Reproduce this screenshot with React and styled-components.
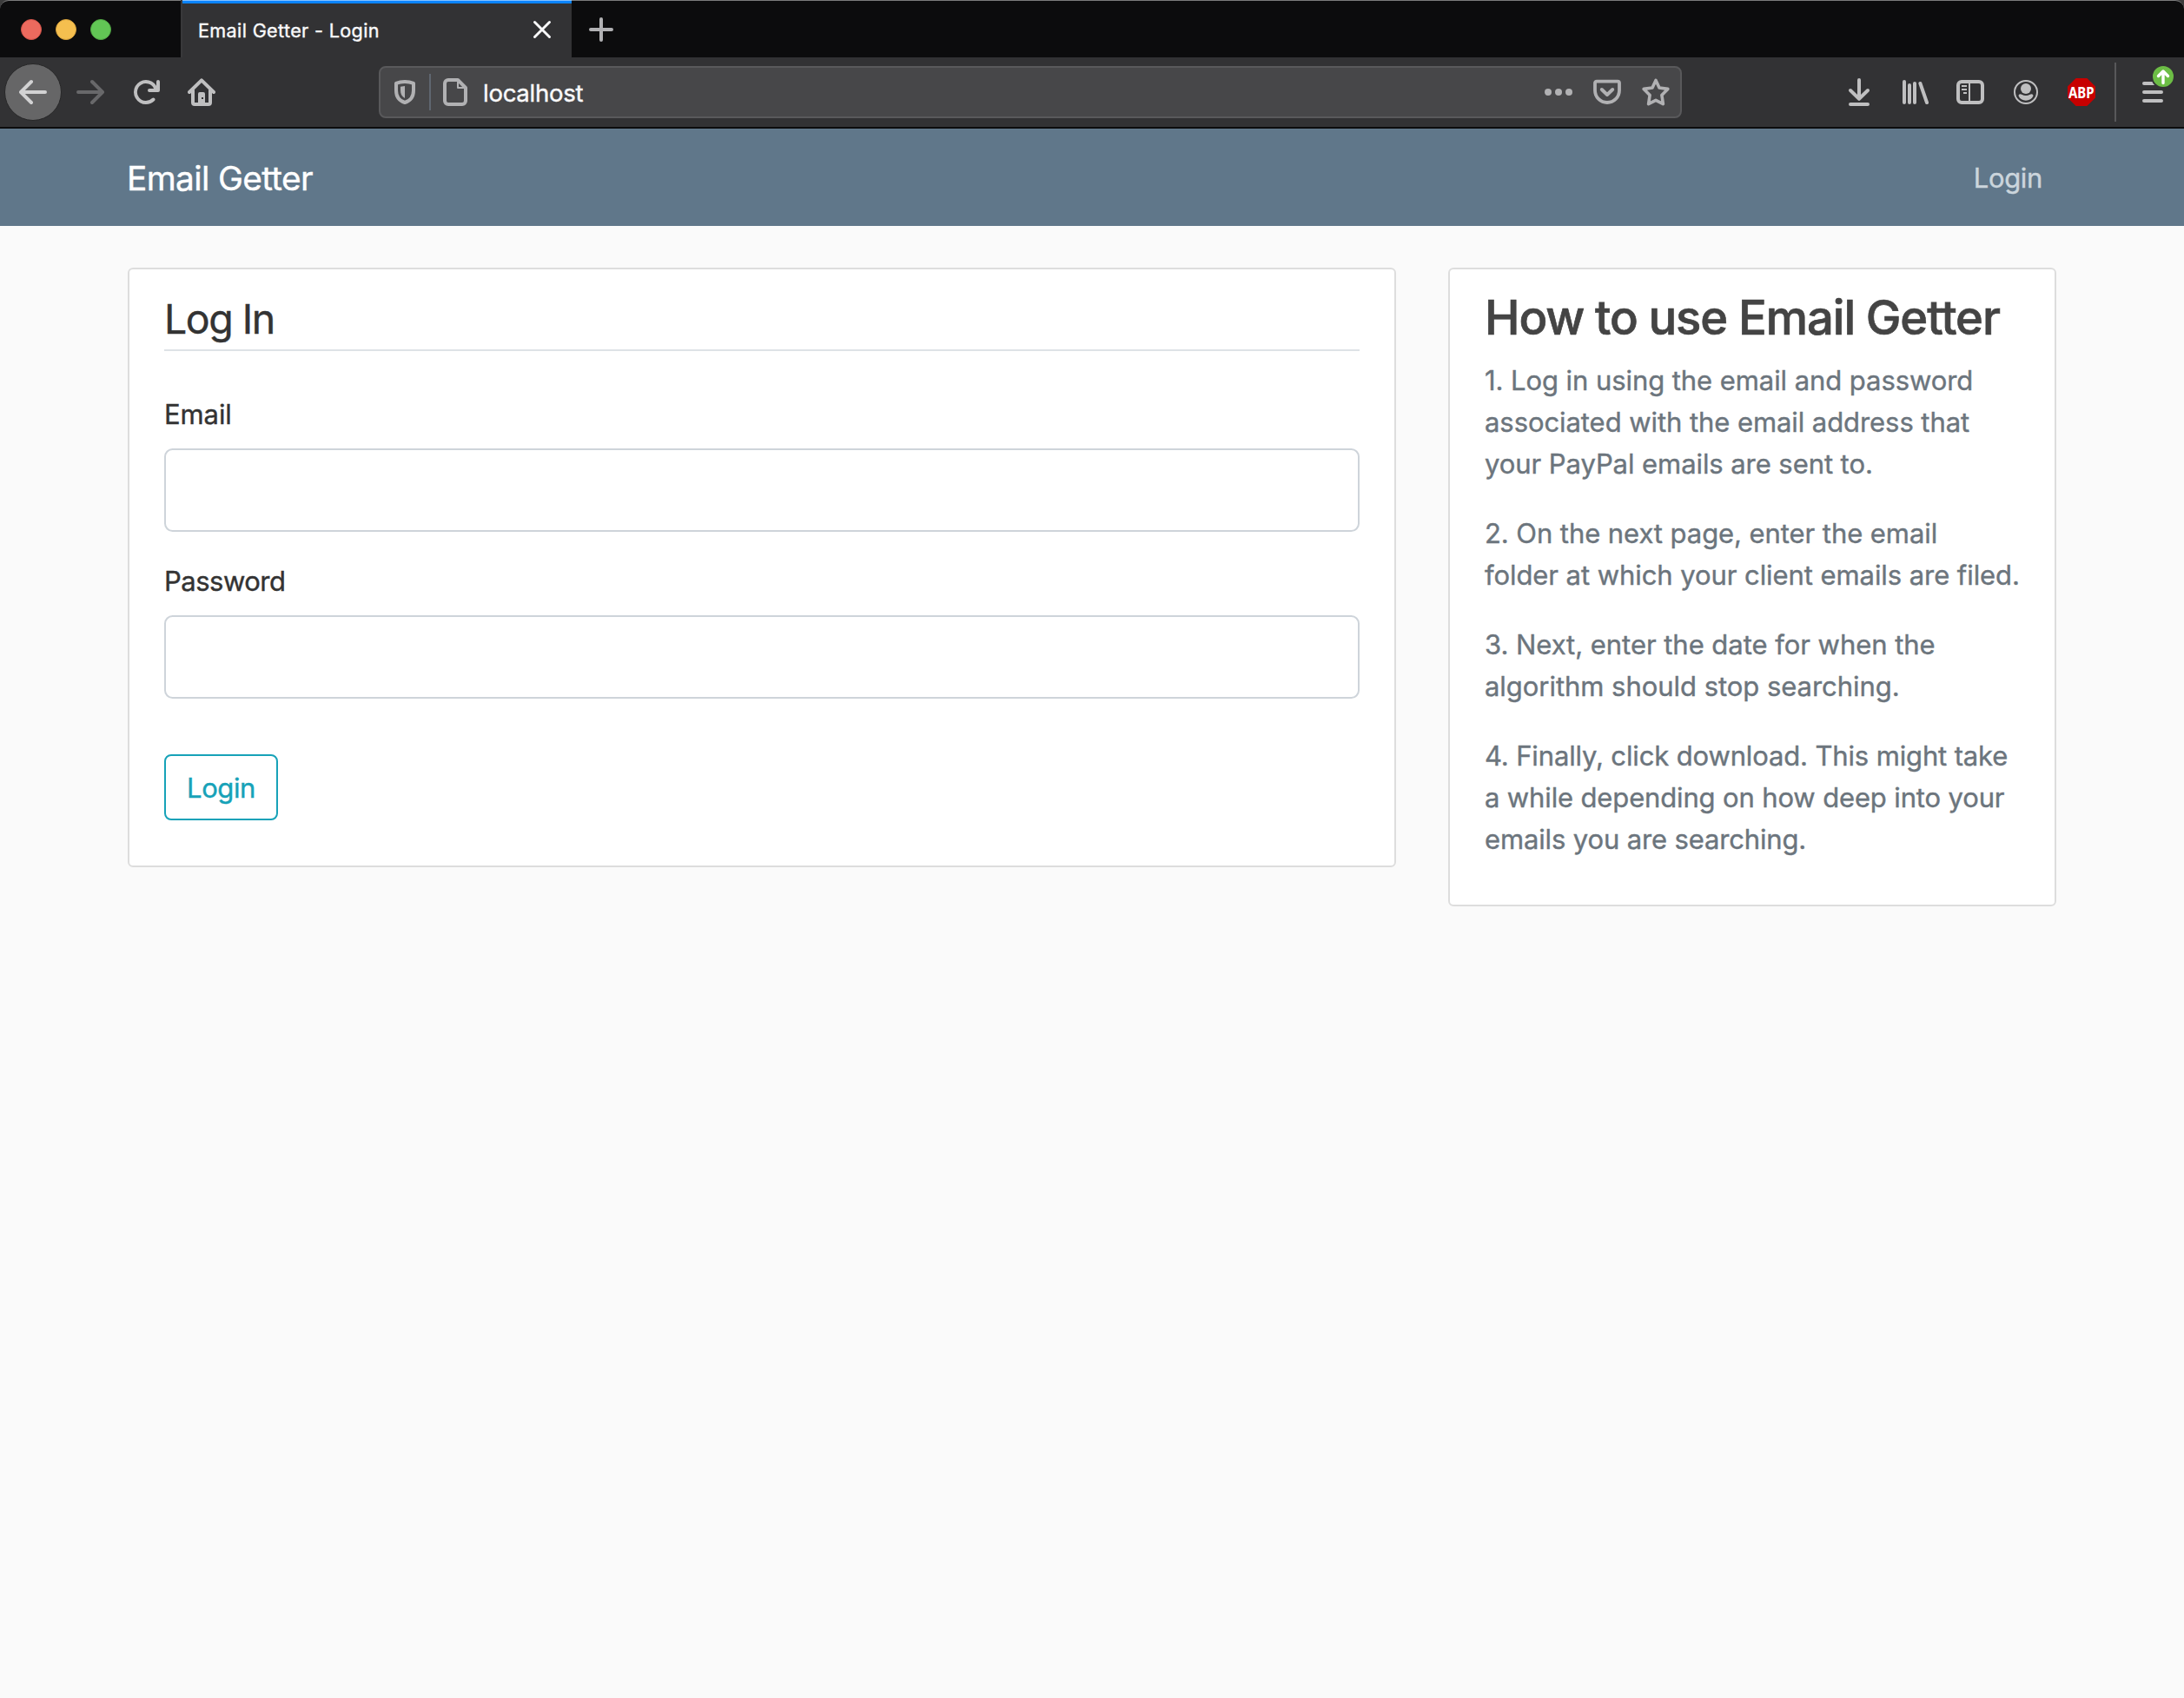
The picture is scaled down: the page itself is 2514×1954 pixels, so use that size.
import React from "react";
import styled, { createGlobalStyle } from "styled-components";

const GlobalStyle = createGlobalStyle`
  *, *::before, *::after { box-sizing: border-box; }
  html, body { margin: 0; padding: 0; background: #fafafa; }
  body {
    font-family: Inter, "Liberation Sans", sans-serif;
    font-size: 31px;
    font-weight: 400;
    line-height: 48px;
    color: #333333;
    font-optical-sizing: none;
    -webkit-text-stroke: 0.4px currentColor;
  }
`;

const Window = styled.div`
  display: flex;
  flex-direction: column;
  width: 2514px;
  height: 1954px;
  overflow: hidden;
  background: #fafafa;
`;

/* ---------- browser chrome ---------- */

const TitleArea = styled.div`
  background: #3c3c3c;
`;

const TabStrip = styled.div`
  display: flex;
  height: 66px;
  background: #0c0c0d;
  border-top: 1px solid #7c7c7c;
  border-radius: 10px 10px 0 0;
`;

const WindowControls = styled.div`
  display: flex;
  align-items: center;
  gap: 16px;
  width: 208px;
  padding-left: 24px;
`;

const Light = styled.span`
  width: 24px;
  height: 24px;
  border-radius: 50%;
  background: ${(p) => p.$fill};
  border: 1px solid ${(p) => p.$edge};
`;

const Tab = styled.div`
  display: flex;
  align-items: center;
  justify-content: space-between;
  width: 450px;
  margin-top: -1px;
  padding: 0 22px 0 18px;
  border-left: 2px solid #38383a;
  background: linear-gradient(#84c1ff 0 1px, #0a84ff 1px 4px, #323234 4px);
  color: #f9f9fa;
`;

const TabTitle = styled.span`
  padding-top: 3px;
  font-size: 21.6px;
  letter-spacing: ${(p) => p.$track};
  white-space: nowrap;
`;

const NewTab = styled.button`
  display: flex;
  align-items: center;
  justify-content: center;
  width: 68px;
  padding: 0;
  border: 0;
  background: none;
`;

const Toolbar = styled.div`
  display: flex;
  align-items: center;
  height: 82px;
  border-bottom: 2px solid #0c0c0d;
  background: #323234;
  color: #bfbfc0;
`;

const NavButtons = styled.div`
  display: flex;
  align-items: center;
  width: 436px;
  padding-left: 5px;
`;

const BackButton = styled.button`
  display: flex;
  align-items: center;
  justify-content: center;
  width: 66px;
  height: 66px;
  margin-right: 1px;
  padding: 0;
  border: 1px solid #272728;
  border-radius: 50%;
  background: #666667;
  color: #d2d2d3;
`;

const ToolButton = styled.button`
  position: relative;
  display: flex;
  align-items: center;
  justify-content: center;
  width: 64px;
  height: 64px;
  padding: 0;
  border: 0;
  background: none;
  color: ${(p) => (p.$dim ? "#68686a" : "#bfbfc0")};
`;

const UrlBar = styled.div`
  display: flex;
  align-items: center;
  width: 1500px;
  height: 60px;
  padding: 0 12px;
  border: 2px solid #59595b;
  border-radius: 8px;
  background: #474749;
  color: #b1b1b3;
`;

const UrlDivider = styled.span`
  width: 2px;
  height: 42px;
  margin: 0 12px;
  background: #5f6670;
`;

const Address = styled.span`
  flex: 1;
  padding: 2px 0 0 16px;
  font-size: 27.6px;
  letter-spacing: -0.3px;
  color: #f9f9fa;
`;

const PageActions = styled.div`
  display: flex;
  gap: 24px;
`;

const Tools = styled.div`
  display: flex;
  align-items: center;
  margin-left: auto;
  padding-right: 4px;
`;

const ToolDivider = styled.span`
  width: 2px;
  height: 68px;
  margin: 0 10px 0 6px;
  background: #58585a;
`;

const AbpBadge = styled.span`
  display: flex;
  align-items: center;
  justify-content: center;
  width: 32px;
  height: 32px;
  background: #c70000;
  color: #fff;
  clip-path: polygon(30% 0, 70% 0, 100% 30%, 100% 70%, 70% 100%, 30% 100%, 0 70%, 0 30%);
`;

const AbpText = styled.span`
  font: 700 18px/32px "Noto Sans", "Open Sans", sans-serif;
  transform: scaleX(0.83);
  -webkit-text-stroke: 0;
`;

const UpdateBadge = styled.span`
  position: absolute;
  top: 0;
  right: 6px;
  width: 28px;
  height: 28px;
  border-radius: 50%;
  border: 2px solid #323234;
  background: #6cbd45;
`;

const Icon = ({ size = 32, box = 32, children, ...rest }) => (
  <svg
    width={size}
    height={size}
    viewBox={`0 0 ${box} ${box}`}
    fill="none"
    stroke="currentColor"
    strokeWidth="4"
    strokeLinecap="round"
    strokeLinejoin="round"
    {...rest}
  >
    {children}
  </svg>
);

const ArrowPath = () => (
  <path
    fill="currentColor"
    stroke="none"
    d="M15 7H3.414l4.293-4.293a1 1 0 0 0-1.414-1.414l-6 6a1 1 0 0 0 0 1.414l6 6a1 1 0 0 0 1.414-1.414L3.414 9H15a1 1 0 0 0 0-2z"
  />
);

const BackIcon = () => (
  <Icon box={16}>
    <ArrowPath />
  </Icon>
);

const ForwardIcon = () => (
  <Icon box={16}>
    <g transform="matrix(-1 0 0 1 16 0)">
      <ArrowPath />
    </g>
  </Icon>
);

const ReloadIcon = () => (
  <Icon box={16}>
    <path
      fill="currentColor"
      stroke="none"
      d="M15 1a1 1 0 0 0-1 1v2.418A6.995 6.995 0 1 0 8 15a6.954 6.954 0 0 0 4.95-2.05 1 1 0 0 0-1.414-1.414A5.019 5.019 0 1 1 12.549 6H10a1 1 0 0 0 0 2h5a1 1 0 0 0 1-1V2a1 1 0 0 0-1-1z"
    />
  </Icon>
);

const HomeIcon = () => (
  <Icon>
    <path d="M2 16 16 2.4 30 16" />
    <path d="M6 14v14a2 2 0 0 0 2 2h16a2 2 0 0 0 2-2V14" />
    <path
      fill="currentColor"
      stroke="none"
      fillRule="evenodd"
      d="M14 16h4a2 2 0 0 1 2 2v12h-8V18a2 2 0 0 1 2-2zm2 6v2h2v-2z"
    />
  </Icon>
);

const ShieldIcon = () => (
  <Icon>
    <path d="M16 4c3.6 0 7 .6 10 1.8V14c0 7-3.5 12-10 14C9.5 26 6 21 6 14V5.8C9 4.6 12.4 4 16 4z" />
    <path fill="currentColor" stroke="none" d="M16 9v14c-3.6-2-5-5-5-9v-4.2z" />
  </Icon>
);

const PageIcon = () => (
  <Icon>
    <path d="M8 2h11l9 9v15a4 4 0 0 1-4 4H8a4 4 0 0 1-4-4V6a4 4 0 0 1 4-4z" />
    <path strokeWidth="2" d="M19 4v7h8" />
  </Icon>
);

const DotsIcon = () => (
  <Icon fill="currentColor" stroke="none">
    <circle cx="4" cy="16" r="4" />
    <circle cx="16" cy="16" r="4" />
    <circle cx="28" cy="16" r="4" />
  </Icon>
);

const PocketIcon = () => (
  <Icon>
    <path strokeWidth="3.8" d="M4 3.6h24a2 2 0 0 1 2 2V14a14 14 0 0 1-28 0V5.6a2 2 0 0 1 2-2z" />
    <path d="m9.8 13 6.2 6 6.2-6" />
  </Icon>
);

const StarIcon = () => (
  <Icon>
    <path
      strokeWidth="3.6"
      d="M16 2.4 20 11l9.8 1.4-6.9 7 1.5 10.3L16 25.4l-8.4 4.3 1.5-10.3-6.9-7L12 11z"
    />
  </Icon>
);

const DownloadIcon = () => (
  <Icon>
    <path d="M16 2v21M6 14l10 9.8L26 14M6 30h20" />
  </Icon>
);

const LibraryIcon = () => (
  <Icon>
    <path d="M4 4v24M10 8v20M16 6v22M22.4 6 30 28" />
  </Icon>
);

const SidebarIcon = () => (
  <Icon>
    <rect x="2" y="4" width="28" height="24" rx="4" />
    <path strokeWidth="2" strokeLinecap="butt" d="M15 4v24M6 9h6M6 13h6M8 17h4" />
  </Icon>
);

const AccountIcon = () => (
  <Icon>
    <circle cx="16" cy="16" r="13" strokeWidth="2" />
    <circle cx="16" cy="12" r="6" fill="currentColor" stroke="none" />
    <path
      fill="currentColor"
      stroke="none"
      d="M7.6 20.6c-.2-2.6 2-3 3.7-1.9 2.9 1.7 6.5 1.7 9.4 0 1.7-1.1 3.9-.7 3.7 1.9-1.4 3.3-4.6 5.2-8.4 5.2s-7-1.9-8.4-5.2z"
    />
  </Icon>
);

const MenuIcon = () => (
  <Icon>
    <path d="M6 6h20M6 16h20M6 26h20" />
  </Icon>
);

const PlusIcon = () => (
  <Icon color="#b1b1b3">
    <path d="M16 4v24M4 16h24" />
  </Icon>
);

const CloseButton = styled.button`
  display: flex;
  margin-top: 2px;
  padding: 0;
  border: 0;
  background: none;
  color: inherit;
`;

const CloseIcon = () => (
  <Icon size={24} box={24} strokeWidth="3">
    <path d="m3.5 3.5 17 17M20.5 3.5l-17 17" />
  </Icon>
);

const UpArrowIcon = () => (
  <Icon size={24} box={24} strokeWidth="3.4" color="#fff" display="block">
    <path d="M12 6v13.5M6.5 11.5 12 6l5.5 5.5" />
  </Icon>
);

/* ---------- page ---------- */

const SiteHeader = styled.header`
  display: flex;
  align-items: center;
  justify-content: space-between;
  height: 112px;
  padding: 2px 163px 0 146px;
  background: #60778a;
`;

const Brand = styled.a`
  font-size: 38.8px;
  letter-spacing: ${(p) => p.$track};
  color: #fff;
`;

const HeaderLink = styled.a`
  color: #cbd5dc;
  letter-spacing: ${(p) => p.$track};
`;

const Main = styled.main`
  display: grid;
  grid-template-columns: 1460px 700px;
  column-gap: 60px;
  align-items: start;
  padding: 48px 147px 0;
`;

const Card = styled.section`
  padding: 20px 40px;
  border: 2px solid #dddddd;
  border-radius: 6px;
  background: #fff;
`;

const Fieldset = styled.fieldset`
  min-width: 0;
  margin: 0 0 32px;
  padding: 0;
  border: 0;
`;

const FormTitle = styled.h2`
  height: 74px;
  margin: 0 0 49px;
  padding-top: 2px;
  border-bottom: 2px solid #dee2e6;
  font-size: 46.5px;
  font-weight: 400;
  line-height: 71px;
  letter-spacing: ${(p) => p.$track};
`;

const Field = styled.label`
  display: flex;
  flex-direction: column;
  gap: 15px;
  margin-bottom: 33px;
  letter-spacing: ${(p) => p.$track};

  &:last-child {
    margin-bottom: 32px;
  }
`;

const Input = styled.input`
  width: 100%;
  height: 96px;
  padding: 16px 32px;
  border: 2px solid #ced4da;
  border-radius: 9.6px;
  background: #fff;
  font: inherit;
  outline: none;
`;

const Submit = styled.button`
  display: block;
  width: 131px;
  height: 76px;
  margin-bottom: 32px;
  padding: 1px 0 0;
  border: 2px solid #17a2b8;
  border-radius: 8px;
  background: transparent;
  color: #17a2b8;
  font: inherit;
  letter-spacing: ${(p) => p.$track};
`;

const HelpTitle = styled.h3`
  margin: 0 0 15px;
  padding-top: 2px;
  color: #444444;
  font-size: 54.4px;
  font-weight: 500;
  line-height: 67.2px;
  letter-spacing: ${(p) => p.$track};
  word-spacing: -0.8px;
  white-space: nowrap;
  -webkit-text-stroke: 0.7px currentColor;
`;

const Step = styled.p`
  margin: 0 0 32px;
  color: #6c757d;
  letter-spacing: ${(p) => p.$track};
  white-space: pre;

  &:last-child {
    margin-bottom: 31px;
  }
`;

const steps = [
  {
    track: "-0.07px",
    text: "1. Log in using the email and password\nassociated with the email address that\nyour PayPal emails are sent to.",
  },
  {
    track: "-0.07px",
    text: "2. On the next page, enter the email\nfolder at which your client emails are filed.",
  },
  {
    track: "-0.04px",
    text: "3. Next, enter the date for when the\nalgorithm should stop searching.",
  },
  {
    track: "-0.14px",
    text: "4. Finally, click download. This might take\na while depending on how deep into your\nemails you are searching.",
  },
];

export default function App() {
  return (
    <Window>
      <GlobalStyle />
      <TitleArea>
        <TabStrip>
          <WindowControls>
            <Light $fill="#ec6a5e" $edge="#d5544a" />
            <Light $fill="#f5bf4f" $edge="#d8a23c" />
            <Light $fill="#62c655" $edge="#51a844" />
          </WindowControls>
          <Tab>
            <TabTitle $track="0.35px">Email Getter - Login</TabTitle>
            <CloseButton><CloseIcon /></CloseButton>
          </Tab>
          <NewTab><PlusIcon /></NewTab>
        </TabStrip>
      </TitleArea>
      <Toolbar>
        <NavButtons>
          <BackButton><BackIcon /></BackButton>
          <ToolButton $dim><ForwardIcon /></ToolButton>
          <ToolButton><ReloadIcon /></ToolButton>
          <ToolButton><HomeIcon /></ToolButton>
        </NavButtons>
        <UrlBar>
          <ShieldIcon />
          <UrlDivider />
          <PageIcon />
          <Address>localhost</Address>
          <PageActions>
            <DotsIcon />
            <PocketIcon />
            <StarIcon />
          </PageActions>
        </UrlBar>
        <Tools>
          <ToolButton><DownloadIcon /></ToolButton>
          <ToolButton><LibraryIcon /></ToolButton>
          <ToolButton><SidebarIcon /></ToolButton>
          <ToolButton><AccountIcon /></ToolButton>
          <ToolButton><AbpBadge><AbpText>ABP</AbpText></AbpBadge></ToolButton>
          <ToolDivider />
          <ToolButton>
            <MenuIcon />
            <UpdateBadge><UpArrowIcon /></UpdateBadge>
          </ToolButton>
        </Tools>
      </Toolbar>
      <SiteHeader>
        <Brand $track="-0.64px">Email Getter</Brand>
        <HeaderLink $track="-0.35px">Login</HeaderLink>
      </SiteHeader>
      <Main>
        <Card>
          <Fieldset>
            <FormTitle $track="-1.5px">Log In</FormTitle>
            <Field $track="-0.1px">Email<Input type="email" /></Field>
            <Field $track="-0.5px">Password<Input type="password" /></Field>
          </Fieldset>
          <Submit $track="-0.4px">Login</Submit>
        </Card>
        <Card>
          <HelpTitle $track="-1.05px">How to use Email Getter</HelpTitle>
          {steps.map((step) => (
            <Step key={step.text} $track={step.track}>{step.text}</Step>
          ))}
        </Card>
      </Main>
    </Window>
  );
}
